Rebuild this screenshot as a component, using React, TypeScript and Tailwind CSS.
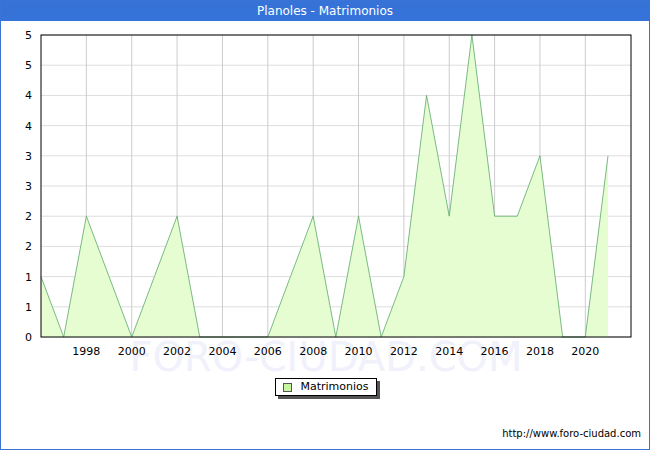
export default function App() {
  const data = [1,0,2,1,0,1,2,0,0,0,0,1,2,0,2,0,1,4,2,5,2,2,3,0,0,3];
  const x0 = 40, x1 = 630, top = 14, bot = 316;
  const step = 22.68;
  const yv = (v: number) => bot - (v / 5) * (bot - top);
  const pts = data.map((v, i) => `${x0 + i * step},${yv(v)}`).join(" ");
  const lastX = x0 + (data.length - 1) * step;
  const area = `${x0},${bot} ${pts} ${lastX},${bot}`;
  const yl = ["0","1","1","2","2","3","3","4","4","5","5"];
  const years = [1998,2000,2002,2004,2006,2008,2010,2012,2014,2016,2018,2020];
  return (
    <div className="w-[650px] h-[450px] border border-[#3a74d6] bg-white flex flex-col" style={{ fontFamily: '"DejaVu Sans", sans-serif' }}>
      <div className="h-[20px] bg-[#3573d9] text-white text-[12px] flex items-center justify-center">Planoles - Matrimonios</div>
      <div className="relative h-[340px]">
        <svg width="648" height="360" className="absolute left-0 top-0" style={{ overflow: "visible" }}>
          <text x="325" y="350" textAnchor="middle" fontSize="40" fill="#f0f1fa" fontFamily="DejaVu Sans">FORO-CIUDAD.COM</text>
          {yl.map((_, i) => { const y = bot - i * (bot - top) / 10; return <line key={i} x1={x0} x2={x1} y1={y} y2={y} stroke="#dddddd" />; })}
          {years.map((yr) => { const x = x0 + (yr - 1996) * step; return <line key={yr} x1={x} x2={x} y1={top} y2={bot} stroke="#cccccc" />; })}
          <polygon points={area} fill="#e6fdd2" />
          <polyline points={pts} fill="none" stroke="#5aa86a" strokeWidth="0.8" />
          <rect x={x0} y={top} width={x1 - x0} height={bot - top} fill="none" stroke="#000" />
          {yl.map((t, i) => <text key={i} x="31" y={bot - i * (bot - top) / 10 + 4} textAnchor="end" fontSize="11" fill="#000">{t}</text>)}
          {years.map((yr) => <text key={yr} x={x0 + (yr - 1996) * step} y="334" textAnchor="middle" fontSize="11" fill="#000">{yr}</text>)}
        </svg>
      </div>
      <div className="flex justify-center mt-[17px] pl-[2px]">
        <div className="border border-black shadow-[3px_3px_0_#555] bg-white h-[18px] px-[7px] flex items-center gap-[8px] text-[11px]">
          <span className="w-[9px] h-[9px] border border-[#555] bg-[#c8f5a0]"></span>
          <span>Matrimonios</span>
        </div>
      </div>
      <div className="flex-1"></div>
      <div className="text-right text-[10px] pr-[8px] pb-[8px]">http://www.foro-ciudad.com</div>
    </div>
  );
}
